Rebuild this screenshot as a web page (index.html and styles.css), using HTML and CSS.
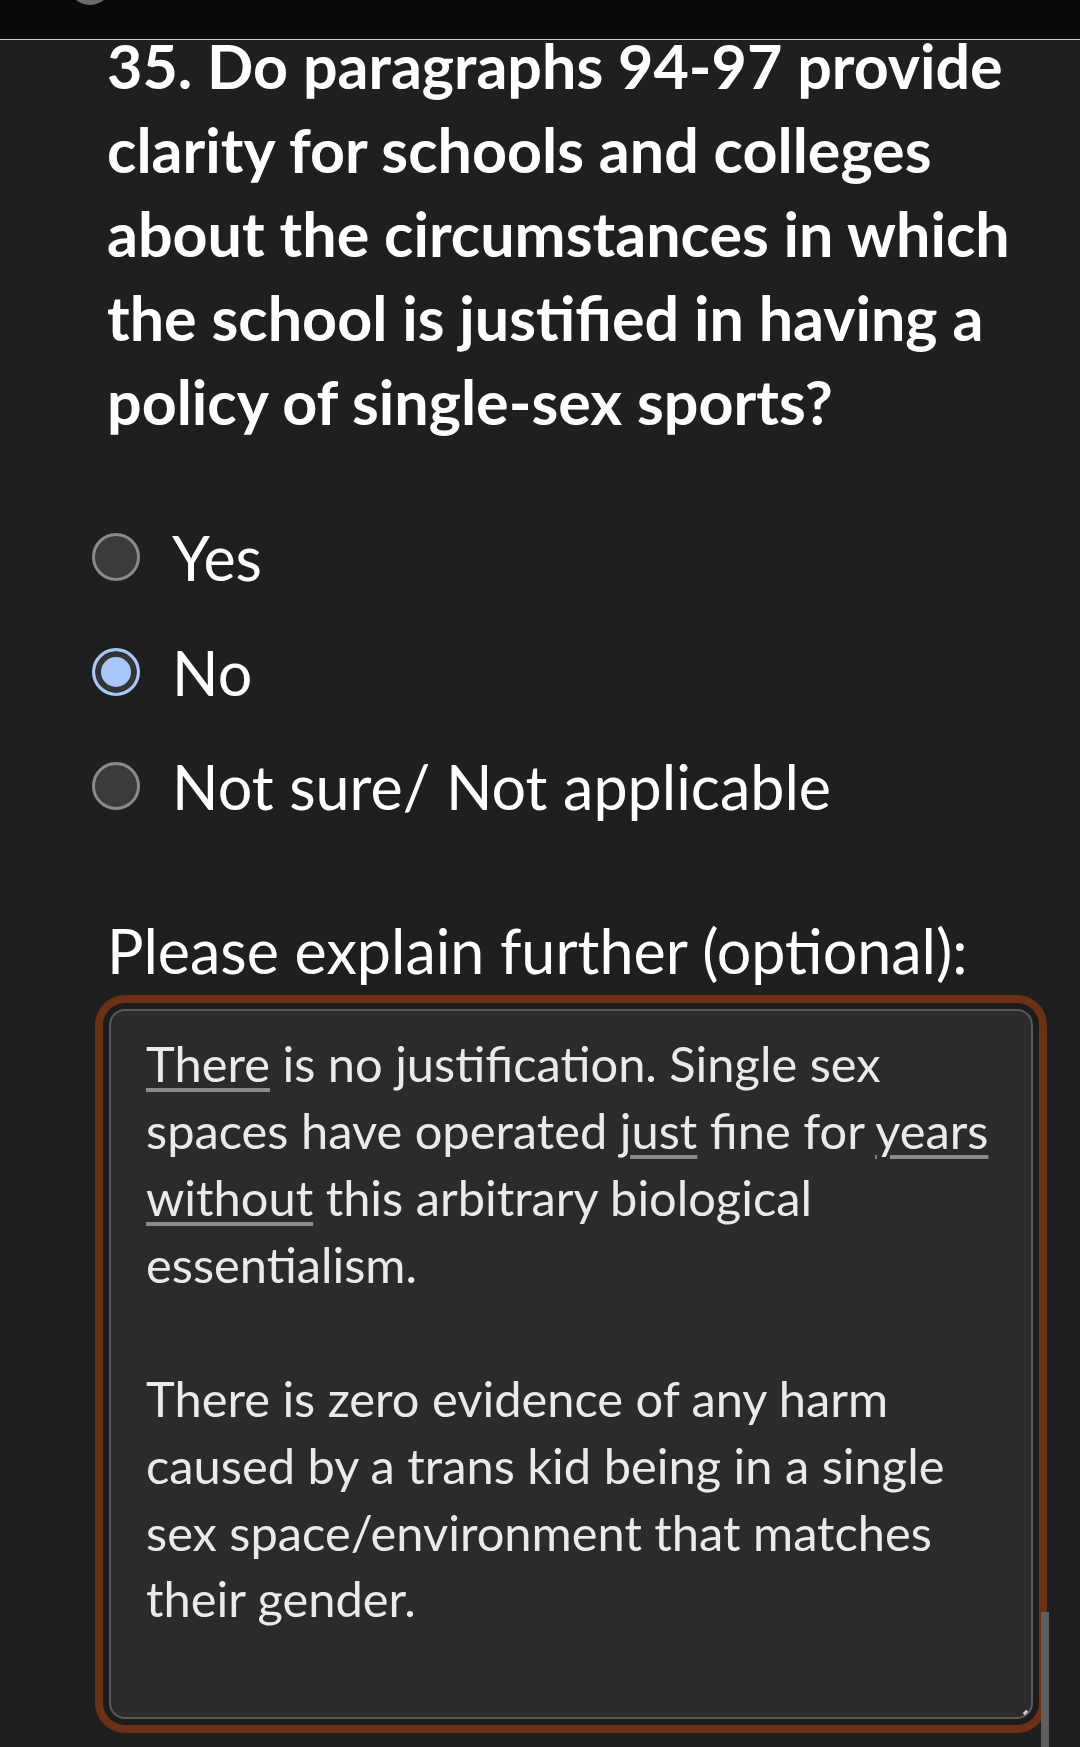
FILE: index.html
```html
<!DOCTYPE html>
<html lang="en">
<head>
<meta charset="utf-8">
<title>Question 35</title>
<link rel="stylesheet" href="styles.css">
</head>
<body>
<div class="topbar"><span class="avatar"></span></div>
<main class="page">
  <h1 class="question">35. Do paragraphs 94-97 provide clarity for schools and colleges about the circumstances in which the school is justified in having a policy of single-sex sports?</h1>
  <div class="options">
    <div class="option"><span class="radio"></span><span class="option-label">Yes</span></div>
    <div class="option"><span class="radio radio-checked"></span><span class="option-label">No</span></div>
    <div class="option"><span class="radio"></span><span class="option-label">Not sure/ Not applicable</span></div>
  </div>
  <p class="prompt">Please explain further (optional):</p>
  <div class="textarea">
    <p class="para"><span class="spell">There</span> is no justification. Single sex spaces have operated <span class="spell">just</span> fine for <span class="spell">years</span> <span class="spell">without</span> this arbitrary biological essentialism.</p>
    <p class="para">There is zero evidence of any harm caused by a trans kid being in a single sex space/environment that matches their gender.</p>
    <span class="grip"></span>
  </div>
</main>
<div class="scrollbar"></div>
</body>
</html>
```
FILE: styles.css
```css
html, body {
  margin: 0;
  padding: 0;
}
body {
  background: #1f1f1f;
  color: #ffffff;
  font-family: Lato, "Noto Sans", "Liberation Sans", sans-serif;
  height: 1747px;
  overflow: hidden;
  position: relative;
}
.topbar {
  position: absolute;
  left: 0;
  top: 0;
  width: 100%;
  height: 39px;
  background: #0a0a0a;
  border-bottom: 1px solid #cfcfcf;
  overflow: hidden;
  z-index: 2;
}
.avatar {
  position: absolute;
  left: 68px;
  top: -39px;
  width: 44px;
  height: 44px;
  border-radius: 50%;
  background: #6b6b6b;
}
.page {
  padding: 24px 33px 0 107px;
}
.question {
  margin: 0;
  font-size: 61px;
  line-height: 84px;
  font-weight: 700;
  color: #ffffff;
}
.options {
  margin-top: 56px;
  display: flex;
  flex-direction: column;
}
.option {
  height: 114.5px;
  display: flex;
  align-items: center;
  gap: 32px;
  margin-left: -15px;
}
.radio {
  width: 48px;
  height: 48px;
  box-sizing: border-box;
  border-radius: 50%;
  border: 3px solid #8a8a8a;
  background: #3b3b3b;
  flex: none;
}
.radio-checked {
  border: 3px solid #a8c7fa;
  background: #a8c7fa;
  box-shadow: inset 0 0 0 6px #353535;
}
.option-label {
  font-size: 61px;
  line-height: 80px;
  color: #ffffff;
  position: relative;
  top: 1px;
}
.prompt {
  margin: 67.7px 0 0 0;
  font-size: 61px;
  line-height: 80px;
  color: #ffffff;
}
.textarea {
  position: relative;
  margin: 18px 0 0 2px;
  width: 924px;
  height: 710px;
  box-sizing: border-box;
  padding: 19px 30px 0 35px;
  background: #2b2b2b;
  border: 2px solid #5a5a5a;
  border-radius: 16px;
  box-shadow: 0 0 0 6px #1c1c1c, 0 0 0 14px #6c3115;
  color: #e8eaed;
  font-size: 48.8px;
  line-height: 66.9px;
}
.para {
  margin: 0 0 66.9px 0;
}
.spell {
  text-decoration: underline;
  text-decoration-color: #8a8a8a;
  text-decoration-thickness: 4px;
  text-underline-offset: 6px;
}
.grip {
  position: absolute;
  right: 3px;
  bottom: 3px;
  width: 5px;
  height: 3px;
  background: #d0d0d0;
  transform: rotate(-45deg);
}
.scrollbar {
  position: absolute;
  left: 1041px;
  top: 1612px;
  width: 8px;
  height: 135px;
  background: #5e5e5e;
}
```
